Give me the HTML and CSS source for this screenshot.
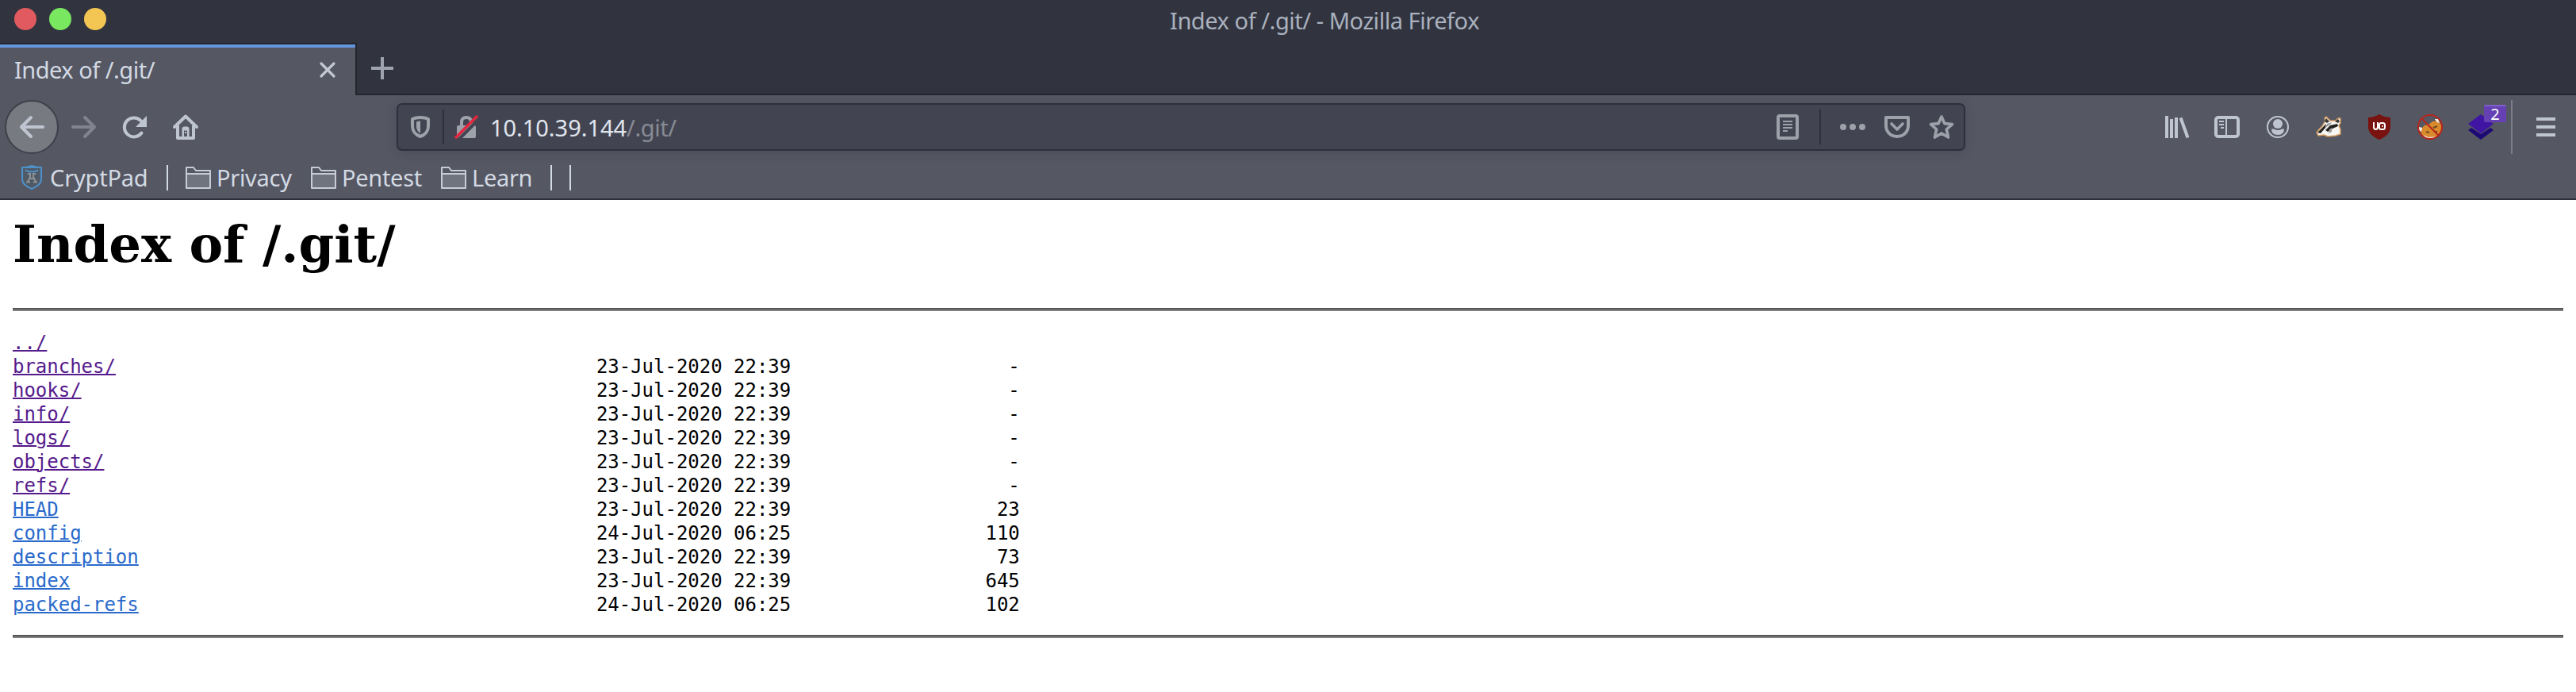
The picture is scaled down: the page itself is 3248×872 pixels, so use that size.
FILE: index.html
```
<!DOCTYPE html>
<html lang="en">
<head>
<meta charset="utf-8">
<title>Index of /.git/</title>
<link rel="stylesheet" href="styles.css">
</head>
<body>
<header class="titlebar">
  <div class="controls"><i class="dot red"></i><i class="dot green"></i><i class="dot yellow"></i></div>
  <div class="window-title">Index of /.git/ - Mozilla Firefox</div>
</header>
<div class="tabs">
  <div class="tab"><span class="label">Index of /.git/</span>
    <svg class="close" width="20" height="20" viewBox="0 0 20 20"><path d="M2 2L18 18M18 2L2 18" stroke="#c3c7d1" stroke-width="3.2" stroke-linecap="round"/></svg>
  </div>
  <div class="tab-rest"><svg width="28" height="28" viewBox="0 0 28 28"><path d="M14 0V28M0 14H28" stroke="#9fa3b0" stroke-width="4"/></svg></div>
</div>
<nav class="toolbar">
  <div class="back"><svg width="32" height="32" viewBox="0 0 32 32"><path d="M30 16H3M15 4L3 16L15 28" class="line"/></svg></div>
  <svg class="forward" width="32" height="32" viewBox="0 0 32 32"><path d="M2 16H29M17 4L29 16L17 28" class="line"/></svg>
  <svg class="reload" width="32" height="32" viewBox="0 0 32 32"><path d="M24.5 23.5A12 12 0 1 1 23 7.6L26 10.6" class="line"/><path d="M31 2V16H17Z" fill="#bfc5d0"/></svg>
  <svg class="home" width="32" height="32" viewBox="0 0 32 32"><path d="M2 16L16 2.5L30 16M6 15V30H26V15" class="line"/><path d="M12 29V18Q12 16 14 16H18Q20 16 20 18V29H18.5V20H13.5V29Z" fill="#bfc5d0" stroke="#bfc5d0" stroke-width="1"/><path d="M16 22V24" stroke="#bfc5d0" stroke-width="2"/></svg>
  <div class="urlbar">
    <svg class="shield" width="24" height="28" viewBox="0 0 24 28"><path d="M12 2C8.500 2 5 2.500 2 4V13C2 19 6 24 12 26C18 24 22 19 22 13V4C19 2.500 15.500 2 12 2Z" fill="none" stroke="#9da1aa" stroke-width="4" stroke-linejoin="round"/><path d="M12 6.500V22C8.500 20 7 17 7 13V7.500Q9.500 6.500 12 6.500Z" fill="#9da1aa"/></svg>
    <i class="rule"></i>
    <svg class="lock" width="28" height="28" viewBox="0 0 28 28"><path d="M8 13V8Q8 2 14 2Q20 2 20 8V13" fill="none" stroke="#9da1aa" stroke-width="4"/><rect x="2" y="12" width="24" height="16" rx="2" fill="#9da1aa"/><path d="M3 31L31 3" stroke="#424551" stroke-width="4"/><path d="M0 28L28 0" stroke="#e22840" stroke-width="3.6"/></svg>
    <span class="address">10.10.39.144<span>/.git/</span></span>
    <svg class="reader" width="28" height="32" viewBox="0 0 28 32"><rect x="2" y="2" width="24" height="28" rx="2" fill="none" stroke="#9da1aa" stroke-width="4"/><path d="M8 9H20M8 13H20M8 17H20M8 21H14" stroke="#9da1aa" stroke-width="2"/></svg>
    <i class="rule"></i>
    <svg class="more" width="32" height="32" viewBox="0 0 32 32"><g fill="#9da1aa"><circle cx="4" cy="16" r="4"/><circle cx="16" cy="16" r="4"/><circle cx="28" cy="16" r="4"/></g></svg>
    <svg class="pocket" width="32" height="28" viewBox="0 0 32 28"><path d="M2 2H30V12C30 20.500 24 26 16 26S2 20.500 2 12Z" fill="none" stroke="#9da1aa" stroke-width="4" stroke-linejoin="round"/><path d="M9 10L16 17L23 10" fill="none" stroke="#9da1aa" stroke-width="3.600" stroke-linecap="round" stroke-linejoin="round"/></svg>
    <svg class="star" width="32" height="32" viewBox="0 0 32 32"><path d="M16 3L19.800 11.600L29.500 12.600L22.300 19L24.500 29L16 24L7.500 29L9.700 19L2.500 12.600L12.200 11.600Z" fill="none" stroke="#9da1aa" stroke-width="3.600" stroke-linejoin="round"/></svg>
  </div>
  <svg class="library" width="32" height="28" viewBox="0 0 32 28"><path d="M2 0V28M8 4V28M14 2V28" stroke="#bfc5d0" stroke-width="4"/><path d="M19.500 2.500L28.500 27.500" stroke="#bfc5d0" stroke-width="4"/></svg>
  <svg class="sidebar" width="32" height="28" viewBox="0 0 32 28"><rect x="2" y="2" width="28" height="24" rx="3" fill="none" stroke="#bfc5d0" stroke-width="4"/><path d="M15 3V26M6 7H12M6 11H12M8 15H12" stroke="#bfc5d0" stroke-width="2"/></svg>
  <svg class="account" width="28" height="28" viewBox="0 0 28 28"><circle cx="14" cy="14" r="13" fill="none" stroke="#bfc5d0" stroke-width="2"/><circle cx="14" cy="10" r="6" fill="#bfc5d0"/><path d="M6 16.500H9Q14 19.500 19 16.500H22Q22 24 14 24T6 16.500Z" fill="#bfc5d0"/></svg>
  <svg class="badger" width="32" height="28" viewBox="0 0 32 28"><path d="M1 21L5 16L8 13L12 6L11 3L13 1L18 6H25L28 3H31L31 9L29 12L31 17V23L25 25L15 26L10 24L3 25Z" fill="#f7f6f4" stroke="#d29a5c" stroke-width="1.500" stroke-linejoin="round"/><path d="M11 7L13 3L17 7L14 9ZM24 7L28 4L30 7L28 9Z" fill="#3a3937"/><path d="M2 21L9 14L13 10L12 15L6 22ZM12 18L18 12L27 10L28 13L21 16L15 20Z" fill="#24221f"/><path d="M14 10L20 8L18 11L12 15ZM17 17L20 15V20L16 22Z" fill="#9b9a98"/></svg>
  <svg class="ublock" width="28" height="32" viewBox="0 0 28 32"><path d="M14 0Q21 4 28 4V16Q28 26 14 32Q0 26 0 16V4Q7 4 14 0Z" fill="#78130f"/><path d="M7 10V16Q7 19 9.500 19Q12 19 12 16V10" fill="none" stroke="#fff" stroke-width="2"/><rect x="14" y="11" width="7" height="8" rx="2.500" fill="none" stroke="#fff" stroke-width="2"/><path d="M17 15H19" stroke="#fff" stroke-width="1.500"/></svg>
  <svg class="noscript" width="32" height="32" viewBox="0 0 32 32"><path d="M2 16L6 17L9 14L14 13L19 9H23L22 6H26L28 11L31 14L30 21L25 28L14 30L6 26Z" fill="#d98a2c"/><path d="M2 16L6 17L5 22L2 20ZM22 6H26L28 11L25 10ZM7 26L14 29L24 28L20 31H12Z" fill="#f4f1ec"/><path d="M11 22L15 23M20 17L25 15M22 22H25" stroke="#6d4a22" stroke-width="2"/><circle cx="16" cy="16" r="15" fill="none" stroke="#b7251b" stroke-width="2"/><path d="M5 5L27 27" stroke="#b7251b" stroke-width="2"/></svg>
  <div class="layers"><svg width="32" height="32" viewBox="0 0 32 32"><path d="M0 20L4 17L16 25L28 17L32 20L16 32Z" fill="#1d0a75"/><path d="M16 0L32 12L16 24L0 12Z" fill="#4015a3"/></svg><span class="badge">2</span></div>
  <i class="separator"></i>
  <svg class="menu" width="24" height="24" viewBox="0 0 24 24"><path d="M0 2H24M0 12H24M0 22H24" stroke="#bfc5d0" stroke-width="4"/></svg>
</nav>
<div class="bookmarks">
  <svg class="crypt" width="28" height="32" viewBox="0 0 28 32"><path d="M14 1Q20 3 26 3V18Q26 25 14 30Q2 25 2 18V3Q8 3 14 1Z" fill="#505a66" stroke="#4e8fc5" stroke-width="2.200"/><path d="M2 3H26M6 6.500Q14 10.500 22 6.500" fill="none" stroke="#4e8fc5" stroke-width="2"/><path d="M9 11H12V15L9 21M19 11H16V15L19 21M11 17H17M7 21.500H12M16 21.500H21" fill="none" stroke="#8d9198" stroke-width="2"/></svg>
  <span class="mark m-crypt">CryptPad</span><i class="bar"></i>
  <svg class="folder" width="32" height="28" viewBox="0 0 32 28"><path d="M1 9H31V27H1Z" fill="#70747f"/><path d="M1 27V1H10L13 5H31V27ZM1 9H31" fill="none" stroke="#c7cdd7" stroke-width="2" stroke-linejoin="round"/></svg>
  <span class="mark m-privacy">Privacy</span>
  <svg class="folder" width="32" height="28" viewBox="0 0 32 28"><path d="M1 9H31V27H1Z" fill="#70747f"/><path d="M1 27V1H10L13 5H31V27ZM1 9H31" fill="none" stroke="#c7cdd7" stroke-width="2" stroke-linejoin="round"/></svg>
  <span class="mark m-pentest">Pentest</span>
  <svg class="folder" width="32" height="28" viewBox="0 0 32 28"><path d="M1 9H31V27H1Z" fill="#70747f"/><path d="M1 27V1H10L13 5H31V27ZM1 9H31" fill="none" stroke="#c7cdd7" stroke-width="2" stroke-linejoin="round"/></svg>
  <span class="mark m-learn">Learn</span><i class="bar"></i><i class="bar last"></i>
</div>
<main class="page">
<h1>Index of /.git/</h1>
<hr>
<pre><a class="seen" href="#">../</a>
<a class="seen" href="#">branches/</a>                                          23-Jul-2020 22:39                   -
<a class="seen" href="#">hooks/</a>                                             23-Jul-2020 22:39                   -
<a class="seen" href="#">info/</a>                                              23-Jul-2020 22:39                   -
<a class="seen" href="#">logs/</a>                                              23-Jul-2020 22:39                   -
<a class="seen" href="#">objects/</a>                                           23-Jul-2020 22:39                   -
<a class="seen" href="#">refs/</a>                                              23-Jul-2020 22:39                   -
<a href="#">HEAD</a>                                               23-Jul-2020 22:39                  23
<a href="#">config</a>                                             24-Jul-2020 06:25                 110
<a href="#">description</a>                                        23-Jul-2020 22:39                  73
<a href="#">index</a>                                              23-Jul-2020 22:39                 645
<a href="#">packed-refs</a>                                        24-Jul-2020 06:25                 102
</pre>
<hr>
</main>
</body>
</html>
```
FILE: styles.css
```
* { box-sizing: border-box; }
body { margin: 0; background: #fff; font-family: "Noto Sans", sans-serif; font-size: 29px; line-height: 40px; height: 872px; overflow: hidden; }
svg { display: block; flex: none; overflow: visible; }
i { display: block; flex: none; }
.line { fill: none; stroke: #bfc5d0; stroke-width: 4; stroke-linecap: round; stroke-linejoin: round; }

.titlebar { display: grid; grid-template-columns: 1475px 1fr; height: 54px; background: #31343f; color: #aab1be; }
.controls { display: flex; gap: 16px; padding: 10px 0 0 18px; }
.dot { width: 28px; height: 28px; border-radius: 50%; }
.red { background: #e15a5f; }
.green { background: #79e760; }
.yellow { background: #f3c553; }
.window-title { padding-top: 6px; white-space: nowrap; letter-spacing: -.45px; }

.tabs { display: flex; height: 66px; background: #31343f; }
.tab { display: flex; width: 450px; padding: 0 25px 0 18px; justify-content: space-between; background: linear-gradient(#24262e 2px, #6495dd 2px, #6495dd 6px, #555763 6px); border-right: 2px solid #24262e; color: #d3dae3; }
.tab .label { padding-top: 14px; letter-spacing: -.5px; }
.close { margin-top: 24px; }
.tab-rest { flex: 1; padding: 18px 0 0 18px; border-bottom: 2px solid #24262e; }

.toolbar { display: flex; align-items: center; height: 80px; background: #555763; padding-left: 6px; }
.back { display: flex; align-items: center; justify-content: center; width: 68px; height: 68px; border-radius: 50%; background: #777a81; border: 2px solid #3e4049; }
.forward { margin-left: 16px; }
.forward .line { stroke: #81848f; }
.reload { margin-left: 32px; }
.home { margin-left: 32px; margin-right: 250px; }
.urlbar { display: flex; align-items: center; width: 1978px; height: 60px; border: 2px solid #2d303c; border-radius: 7px; background: #424551; box-shadow: 0 2px 12px rgba(45, 48, 60, .25); padding-left: 16px; }
.rule { width: 2px; height: 44px; background: #2d303c; }
.shield { margin-right: 16px; }
.lock { margin: 0 16px 0 14px; }
.address { width: 1622px; padding-top: 2px; color: #e0e5ee; white-space: nowrap; letter-spacing: -.05px; }
.address span { color: #888b95; letter-spacing: -.4px; }
.reader { margin-right: 26px; }
.more { margin: 0 24px; }
.star { margin-left: 24px; }
.library { margin-left: 252px; }
.sidebar { margin-left: 30px; }
.account { margin-left: 34px; }
.badger { margin-left: 34px; }
.ublock { margin-left: 34px; }
.noscript { margin-left: 34px; }
.layers { position: relative; margin-left: 32px; }
.badge { position: absolute; left: 20px; top: -12px; width: 28px; height: 22px; border-radius: 2px; background: #6541b4; border-top: 2px solid #8061c8; color: #fff; font-size: 20px; line-height: 19px; text-align: center; }
.separator { width: 2px; height: 68px; margin-left: 22px; background: #7b7e89; }
.menu { margin-left: 30px; }

.bookmarks { display: flex; align-items: center; height: 52px; padding: 0 0 2px 26px; background: #555763; border-bottom: 2px solid #2d303c; color: #d3dae3; }
.mark { white-space: nowrap; line-height: 40px; letter-spacing: -.3px; }
.m-crypt { width: 147px; margin-left: 9px; letter-spacing: -.2px; }
.m-crypt + .bar { margin-right: 22px; }
.m-privacy, .m-pentest, .m-learn { margin-left: 7px; }
.m-privacy { width: 119px; }
.m-pentest { width: 125px; }
.m-learn { width: 99px; }
.bar { width: 2px; height: 32px; background: #d3dae3; }
.last { margin-left: 22px; }

.page { padding: 18px 16px 0; }
h1 { margin: 0 0 42px; font: bold 64px/76px "DejaVu Serif", serif; color: #000; white-space: nowrap; }
hr { height: 4px; margin: 0; border: 0; background: linear-gradient(#555 2px, #808080 2px); }
pre { margin: 25px 0 23px; font: 24px/30px "DejaVu Sans Mono", monospace; letter-spacing: -.02px; color: #000; }
a { color: #2a6acb; text-decoration-thickness: 2px; }
a.seen { color: #551a8b; }
```
